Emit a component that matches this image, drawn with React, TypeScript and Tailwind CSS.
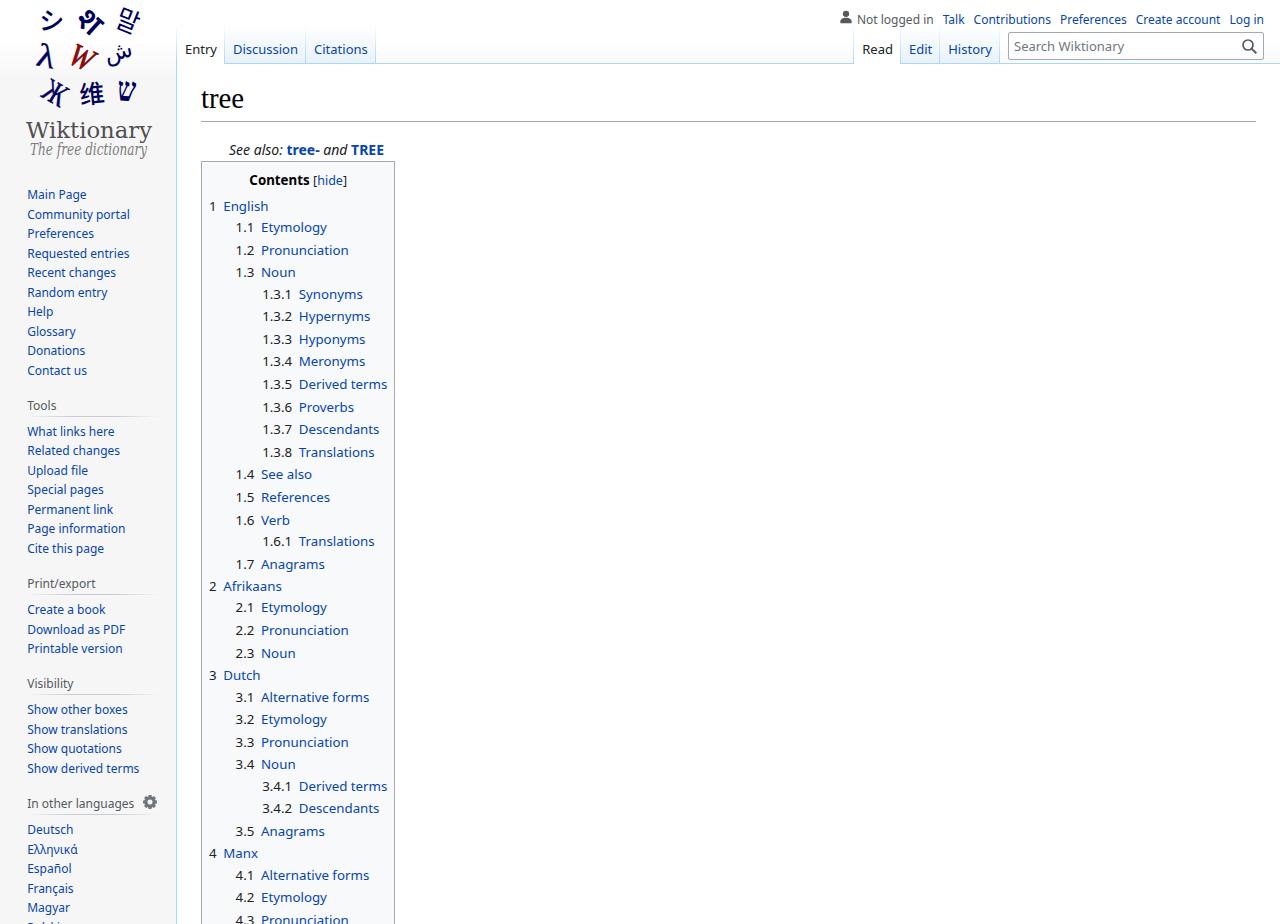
import React from "react";

type TocItem = { n: string; t: string; c?: TocItem[] };

const toc: TocItem[] = [
  {
    n: "1", t: "English", c: [
      { n: "1.1", t: "Etymology" },
      { n: "1.2", t: "Pronunciation" },
      {
        n: "1.3", t: "Noun", c: [
          { n: "1.3.1", t: "Synonyms" },
          { n: "1.3.2", t: "Hypernyms" },
          { n: "1.3.3", t: "Hyponyms" },
          { n: "1.3.4", t: "Meronyms" },
          { n: "1.3.5", t: "Derived terms" },
          { n: "1.3.6", t: "Proverbs" },
          { n: "1.3.7", t: "Descendants" },
          { n: "1.3.8", t: "Translations" },
        ],
      },
      { n: "1.4", t: "See also" },
      { n: "1.5", t: "References" },
      { n: "1.6", t: "Verb", c: [{ n: "1.6.1", t: "Translations" }] },
      { n: "1.7", t: "Anagrams" },
    ],
  },
  {
    n: "2", t: "Afrikaans", c: [
      { n: "2.1", t: "Etymology" },
      { n: "2.2", t: "Pronunciation" },
      { n: "2.3", t: "Noun" },
    ],
  },
  {
    n: "3", t: "Dutch", c: [
      { n: "3.1", t: "Alternative forms" },
      { n: "3.2", t: "Etymology" },
      { n: "3.3", t: "Pronunciation" },
      {
        n: "3.4", t: "Noun", c: [
          { n: "3.4.1", t: "Derived terms" },
          { n: "3.4.2", t: "Descendants" },
        ],
      },
      { n: "3.5", t: "Anagrams" },
    ],
  },
  {
    n: "4", t: "Manx", c: [
      { n: "4.1", t: "Alternative forms" },
      { n: "4.2", t: "Etymology" },
      { n: "4.3", t: "Pronunciation" },
    ],
  },
];

const portals: { title?: string; gear?: boolean; links: string[] }[] = [
  { links: ["Main Page", "Community portal", "Preferences", "Requested entries", "Recent changes", "Random entry", "Help", "Glossary", "Donations", "Contact us"] },
  { title: "Tools", links: ["What links here", "Related changes", "Upload file", "Special pages", "Permanent link", "Page information", "Cite this page"] },
  { title: "Print/export", links: ["Create a book", "Download as PDF", "Printable version"] },
  { title: "Visibility", links: ["Show other boxes", "Show translations", "Show quotations", "Show derived terms"] },
  { title: "In other languages", gear: true, links: ["Deutsch", "Ελληνικά", "Español", "Français", "Magyar", "Polski"] },
];

function TocList({ items, nested }: { items: TocItem[]; nested?: boolean }) {
  return (
    <ul className={nested ? "ml-[26.6px]" : "mt-[4.6px]"}>
      {items.map((i) => (
        <li key={i.n} className="mb-[1.33px]">
          <a href="#" className="block whitespace-nowrap text-[#0645ad]">
            <span className="inline-block pr-[6.65px] text-[#202122]">{i.n}</span>
            {i.t}
          </a>
          {i.c && <TocList items={i.c} nested />}
        </li>
      ))}
    </ul>
  );
}

function Logo() {
  return (
    <svg width="160" height="160" viewBox="0 0 160 160" className="block overflow-visible">
      <g fill="#00005c" textAnchor="middle">
        <text transform="translate(51 30) rotate(4)" fontFamily="Noto Sans CJK JP" fontWeight="500" fontSize="25">シ</text>
        <text transform="translate(82.5 29.5) rotate(42)" fontFamily="Noto Sans, sans-serif" fontWeight="600" fontSize="32">श</text>
        <text transform="translate(124 30) rotate(22) scale(.92 1)" fontFamily="Noto Sans CJK KR" fontSize="27">말</text>
        <text transform="translate(44 67) rotate(12) scale(1.15 1)" fontFamily="Liberation Serif" fontSize="33" stroke="#00005c" strokeWidth=".3">λ</text>
        <text transform="translate(120 59) rotate(-14)" fontFamily="DejaVu Sans" fontSize="23">ش</text>
        <text transform="translate(50 102) rotate(30) scale(.8 1)" fontFamily="Liberation Serif" fontSize="32" stroke="#00005c" strokeWidth=".5">Ж</text>
        <text transform="translate(93 103) rotate(-6)" fontFamily="Noto Sans CJK SC" fontWeight="500" fontSize="25">维</text>
        <text transform="translate(126 101) rotate(4) scale(.84 1.1)" fontFamily="Liberation Serif" fontWeight="700" fontSize="31">ש</text>
      </g>
      <text transform="translate(77 67) rotate(25) scale(.88 1)" textAnchor="middle" fontFamily="Liberation Serif" fontStyle="italic" fontSize="32" fill="#a00808" stroke="#600" strokeWidth=".7">W</text>
      <text x="26" y="138" fontFamily="DejaVu Serif" fontSize="23" textLength="126" lengthAdjust="spacingAndGlyphs" fill="#505050">Wiktionary</text>
      <text x="30" y="155" fontFamily="DejaVu Serif" fontStyle="italic" fontSize="16" textLength="117" lengthAdjust="spacingAndGlyphs" fill="#7d7d7d">The free dictionary</text>
    </svg>
  );
}

function Gear() {
  return (
    <svg width="14" height="14" viewBox="0 0 20 20" fill="#72777d" className="mt-px block">
      <g transform="translate(10 10)">
        <path fillRule="evenodd" d="M0-7.8a7.8 7.8 0 1 0 0 15.6a7.8 7.8 0 1 0 0-15.6ZM0-3.6a3.6 3.6 0 1 1 0 7.2a3.6 3.6 0 1 1 0-7.2Z" />
        <path d="M-2-9.9h4l1 3.4h-6ZM-2 9.9h4l1-3.4h-6Z" />
        <path transform="rotate(45)" d="M-2-9.9h4l1 3.4h-6ZM-2 9.9h4l1-3.4h-6Z" />
        <path transform="rotate(90)" d="M-2-9.9h4l1 3.4h-6ZM-2 9.9h4l1-3.4h-6Z" />
        <path transform="rotate(135)" d="M-2-9.9h4l1 3.4h-6ZM-2 9.9h4l1-3.4h-6Z" />
      </g>
    </svg>
  );
}

function Edge() {
  return <div className="h-[40px] w-px shrink-0 bg-linear-to-b from-transparent to-[#a7d7f9]" />;
}

function Tab({ label, selected }: { label: string; selected?: boolean }) {
  return (
    <>
      <div
        className={
          selected
            ? "h-[40px] bg-white pl-[8px] pr-[7px] pt-[16px]"
            : "h-[39px] bg-linear-to-b from-white to-[#e8f2f8] pl-[8px] pr-[7px] pt-[16px]"
        }
      >
        <a href="#" className={selected ? "block text-[13px] leading-[18px] text-[#202122]" : "block text-[13px] leading-[18px] text-[#0645ad]"}>
          {label}
        </a>
      </div>
      <Edge />
    </>
  );
}

export default function App() {
  return (
    <div className="flex h-[924px] w-full overflow-hidden bg-[#f6f6f6] bg-[linear-gradient(to_bottom,#fff_0,#fff_40px,#f6f6f6_80px)] bg-[length:100%_80px] bg-no-repeat font-['Noto_Sans',sans-serif] text-[#202122]">
      <aside className="w-[176px] shrink-0">
        <Logo />
        <nav className="pt-[25px] text-[12px]">
          {portals.map((p, i) => (
            <section key={i} className="pl-[27.2px]">
              {p.title && (
                <div className="flex h-[36.8px] w-[132px] justify-between bg-[linear-gradient(to_right,rgba(200,204,209,0)_0,#c8ccd1_33%,#c8ccd1_66%,rgba(200,204,209,0)_100%)] bg-[length:100%_1px] bg-bottom bg-no-repeat pr-[2px] pt-[15.6px]">
                  <h3 className="whitespace-nowrap leading-[20px] text-[#54595d]">{p.title}</h3>
                  {p.gear && <Gear />}
                </div>
              )}
              <ul className={p.title ? "pt-[5px]" : ""}>
                {p.links.map((l) => (
                  <li key={l} className="h-[19.5px] whitespace-nowrap py-[3px] leading-[13.5px]">
                    <a href="#" className="text-[#0645ad]">{l}</a>
                  </li>
                ))}
              </ul>
            </section>
          ))}
        </nav>
      </aside>

      <div className="flex min-w-0 flex-1 flex-col">
        <header className="z-10 -mb-px flex h-[64px] shrink-0 justify-between bg-[linear-gradient(#a7d7f9,#a7d7f9)] bg-[length:100%_1px] bg-bottom bg-no-repeat">
          <div className="flex pt-[24px]">
            <Edge />
            <Tab label="Entry" selected />
            <Tab label="Discussion" />
            <Tab label="Citations" />
          </div>
          <div className="flex flex-col items-end">
            <div className="z-10 flex h-[24px] gap-[9px] pr-[16px] pt-[11px] text-[12px] leading-[17px]">
              <span className="flex text-[#54595d]">
                <svg width="14" height="14" viewBox="0 0 20 20" fill="#54595d" className="-mt-px mr-[4px]">
                  <path d="M10 11c-5.92 0-8 3-8 5v3h16v-3c0-2-2.08-5-8-5z" />
                  <circle cx="10" cy="5.5" r="4.5" />
                </svg>
                Not logged in
              </span>
              {["Talk", "Contributions", "Preferences", "Create account", "Log in"].map((l) => (
                <a key={l} href="#" className="text-[#0645ad]">{l}</a>
              ))}
            </div>
            <div className="flex pr-[16px]">
              <Edge />
              <Tab label="Read" selected />
              <Tab label="Edit" />
              <Tab label="History" />
              <div className="ml-[8px] mt-[8px] flex h-[28px] w-[256px] items-center justify-between rounded-[2px] border border-[#a2a9b1] bg-white/50 pl-[5px] pr-[6px]">
                <span className="text-[13px] leading-[18px] text-[#72777d]">Search Wiktionary</span>
                <svg width="15" height="15" viewBox="0 0 15 15" fill="none" stroke="#54595d" strokeWidth="1.7">
                  <circle cx="6" cy="6" r="5" />
                  <path d="M9.6 9.6L14.3 14.3" strokeWidth="2" />
                </svg>
              </div>
            </div>
          </div>
        </header>

        <main className="flex-1 border-l border-[#a7d7f9] bg-white pl-[24px] pr-[24px] pt-[21px]">
          <h1 className="h-[38px] border-b border-[#a2a9b1] font-['Liberation_Serif',serif] text-[28.8px] leading-[28px] text-black">tree</h1>
          <div className="pl-[28px] pt-[17px] text-[14px] italic leading-[22.4px]">
            See also: <a href="#" className="font-bold not-italic text-[#0645ad]">tree-</a> and{" "}
            <a href="#" className="font-bold not-italic text-[#0645ad]">TREE</a>
          </div>
          <div className="w-fit border border-[#a2a9b1] bg-[#f8f9fa] p-[7px] pt-[7.5px] text-[13.3px] leading-[21.28px]">
            <div className="text-center">
              <b className="text-black">Contents</b>{" "}
              <span className="text-[12.5px]">[<a href="#" className="text-[#0645ad]">hide</a>]</span>
            </div>
            <TocList items={toc} />
          </div>
        </main>
      </div>
    </div>
  );
}
